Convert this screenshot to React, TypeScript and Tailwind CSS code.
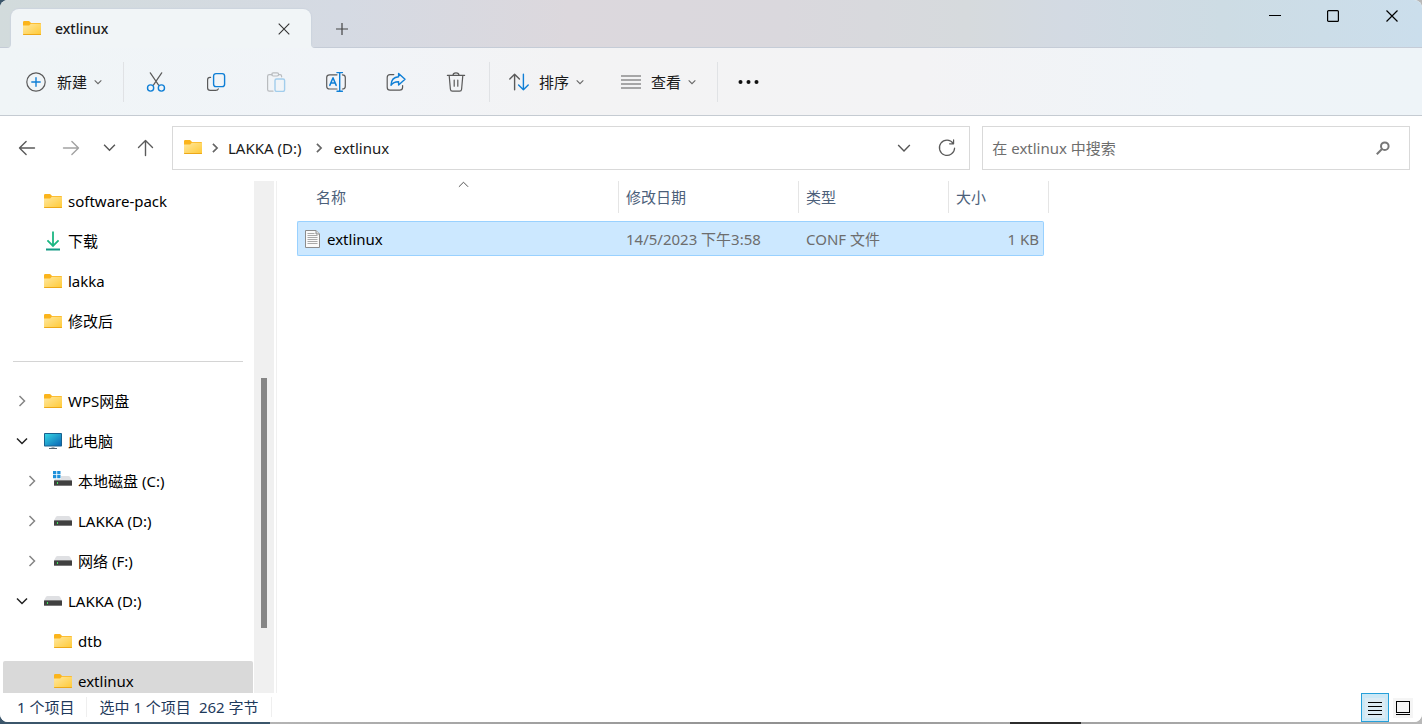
import React from "react";

type Kind = "folder" | "download" | "monitor" | "drive" | "system";

function Folder() {
  return (
    <svg width="18" height="15" viewBox="0 0 18 15" className="shrink-0" aria-hidden="true">
      <defs>
        <linearGradient id="folderFace" x1="0" y1="0" x2="1" y2="1">
          <stop offset="0" stopColor="#ffe8a0" />
          <stop offset="1" stopColor="#ffc935" />
        </linearGradient>
      </defs>
      <path d="M0 1.2Q0 0 1.2 0H5.6Q6.2 0 6.7.5L8 2H17Q18 2 18 3V5H0Z" fill="#fbb41c" />
      <path d="M0 4.4H6.2L7.8 2.8H17.2Q18 2.8 18 3.6V14H0Z" fill="url(#folderFace)" />
      <path d="M0 13H18V13.2Q18 14 17.2 14H.8Q0 14 0 13.2Z" fill="#eda818" />
    </svg>
  );
}

function Drive({ system = false }: { system?: boolean }) {
  return (
    <svg width="19" height="20" viewBox="0 0 19 20" className="-ml-px shrink-0" aria-hidden="true">
      <path d="M4.6 5H15.4Q16.4 5 17 5.8L19 9.6V11H1V9.6L3 5.8Q3.6 5 4.6 5Z" fill="#dfe0e3" />
      <rect x="1" y="9" width="18" height="6" rx=".6" fill="#7a7a7a" />
      <rect x="1" y="10" width="18" height="4" fill="#404040" />
      <rect x="4" y="11" width="1" height="2" fill="#3de35b" />
      {system && (
        <>
          <path d="M0 0H8V8H0Z" fill="#fff" />
          <path d="M0 0H3.3V3.2H0ZM4.2 0H7.5V3.2H4.2ZM0 4.1H3.3V7.3H0ZM4.2 4.1H7.5V7.3H4.2Z" fill="#1e90da" />
        </>
      )}
    </svg>
  );
}

function Monitor() {
  return (
    <svg width="18" height="17" viewBox="0 0 18 17" className="shrink-0" aria-hidden="true">
      <defs>
        <linearGradient id="screen" x1="0" y1="0" x2="1" y2="1">
          <stop offset="0" stopColor="#35d5e4" />
          <stop offset="1" stopColor="#0b67b6" />
        </linearGradient>
      </defs>
      <rect width="18" height="13.5" rx=".8" fill="#17618f" />
      <rect x="1" y="1" width="16" height="11.5" fill="url(#screen)" />
      <path d="M7.5 13.5H10.5V15.5H7.5Z" fill="#a9b2bb" />
      <path d="M5 15H13V16H5Z" fill="#53606c" />
    </svg>
  );
}

function Download() {
  return (
    <svg width="18" height="20" viewBox="0 0 18 20" className="shrink-0" fill="none" aria-hidden="true">
      <path d="M9 .5V14.5M3.4 9.4L9 15L14.6 9.4" stroke="#1bb682" strokeWidth="1.8" />
      <path d="M2 18.5H16" stroke="#139a84" strokeWidth="1.8" />
    </svg>
  );
}

function NodeIcon({ kind }: { kind: Kind }) {
  if (kind === "folder") return <Folder />;
  if (kind === "download") return <Download />;
  if (kind === "monitor") return <Monitor />;
  return <Drive system={kind === "system"} />;
}

type Dir = "down" | "right" | "up";

function Chevron({ dir, className }: { dir: Dir; className: string }) {
  const d = {
    down: "M1 3.5L6 8.5L11 3.5",
    right: "M3.5 1L8.5 6L3.5 11",
    up: "M1 8.5L6 3.5L11 8.5",
  }[dir];
  return (
    <svg viewBox="0 0 12 12" fill="none" stroke="currentColor" className={"shrink-0 " + className} aria-hidden="true">
      <path d={d} />
    </svg>
  );
}

function Icon({ children, className = "" }: { children: React.ReactNode; className?: string }) {
  return (
    <svg
      width="20"
      height="20"
      viewBox="0 0 20 20"
      fill="none"
      stroke="#5a5a5a"
      strokeWidth="1.2"
      strokeLinecap="round"
      strokeLinejoin="round"
      className={"shrink-0 " + className}
      aria-hidden="true"
    >
      {children}
    </svg>
  );
}

const BLUE = "#0f7fd6";

const tools: { label: string; disabled?: boolean; icon: React.ReactNode }[] = [
  {
    label: "剪切",
    icon: (
      <>
        <path d="M4.3 0.8L12.6 13.2M15.7 0.8L7.4 13.2" />
        <circle cx="4.6" cy="16" r="3.1" stroke={BLUE} strokeWidth="1.4" />
        <circle cx="15.4" cy="16" r="3.1" stroke={BLUE} strokeWidth="1.4" />
      </>
    ),
  },
  {
    label: "复制",
    icon: (
      <>
        <path d="M4.6 5.4H4Q1.6 5.4 1.6 7.8V15.8Q1.6 18.4 4.2 18.4H9.6Q12 18.4 12.3 16.8" />
        <rect x="7.6" y="1.6" width="11" height="13" rx="2.4" stroke={BLUE} strokeWidth="1.4" />
      </>
    ),
  },
  {
    label: "粘贴",
    disabled: true,
    icon: (
      <>
        <path d="M6 2.6H3.2Q1.6 2.6 1.6 4.2V17.6Q1.6 19.2 3.2 19.2H7M12.5 2.6H14Q15.6 2.6 15.6 4.2V4.8" stroke="#b9bcbf" />
        <rect x="5.8" y="0.8" width="6.8" height="3.2" rx="1.4" stroke="#b9bcbf" />
        <rect x="9" y="7" width="9.6" height="12.4" rx="1.6" stroke="#a2cdec" strokeWidth="1.4" />
      </>
    ),
  },
  {
    label: "重命名",
    icon: (
      <>
        <path d="M11 2.8H3.6Q.7 2.8 .7 5.6V14.2Q.7 17 3.6 17H11M16.4 2.8Q19.3 2.8 19.3 5.6V14.2Q19.3 17 16.4 17" />
        <path d="M13.7 .6V19.2M11 .6H16.4M11 19.2H16.4" stroke={BLUE} strokeWidth="1.4" />
        <path d="M3.8 13.4L7 5.8L10.2 13.4M4.9 11H9.1" stroke={BLUE} strokeWidth="1.5" />
      </>
    ),
  },
  {
    label: "共享",
    icon: (
      <>
        <path d="M7.8 2.6H4Q1.2 2.6 1.2 5.4V15.2Q1.2 18.2 4 18.2H13.6Q16.6 18.2 16.6 15.2V13.6" />
        <path d="M12.6 1.4L19 7.2L12.6 13V9.8Q7.8 9.6 5 13.2Q5.2 5.4 12.6 4.8Z" stroke={BLUE} strokeWidth="1.4" />
      </>
    ),
  },
  {
    label: "删除",
    icon: (
      <path d="M1.4 3.4H18.6M7 3.2Q7 .8 10 .8T13 3.2M3.2 3.6L4.4 17.2Q4.6 19.2 6.4 19.2H13.6Q15.4 19.2 15.6 17.2L16.8 3.6M8.2 8V14.2M11.8 8V14.2" />
    ),
  },
];

function Divider() {
  return <div className="h-10 w-px shrink-0 bg-[#e0e2e5]" />;
}

type Row = { label: string; kind: Kind; level: 0 | 1; arrow?: "right" | "down"; selected?: boolean };

const quick: Row[] = [
  { label: "software-pack", kind: "folder", level: 0 },
  { label: "下载", kind: "download", level: 0 },
  { label: "lakka", kind: "folder", level: 0 },
  { label: "修改后", kind: "folder", level: 0 },
];

const tree: Row[] = [
  { label: "WPS网盘", kind: "folder", level: 0, arrow: "right" },
  { label: "此电脑", kind: "monitor", level: 0, arrow: "down" },
  { label: "本地磁盘 (C:)", kind: "system", level: 1, arrow: "right" },
  { label: "LAKKA (D:)", kind: "drive", level: 1, arrow: "right" },
  { label: "网络 (F:)", kind: "drive", level: 1, arrow: "right" },
  { label: "LAKKA (D:)", kind: "drive", level: 0, arrow: "down" },
  { label: "dtb", kind: "folder", level: 1 },
  { label: "extlinux", kind: "folder", level: 1, selected: true },
];

function TreeRow({ row }: { row: Row }) {
  return (
    <li>
      <button
        type="button"
        className={
          "flex h-10 w-full items-center rounded-xs text-left text-black " +
          (row.level ? "pl-[23px] " : "pl-[13px] ") +
          (row.selected ? "bg-[#d9d9d9]" : "")
        }
      >
        <span className="flex w-7 shrink-0">
          {row.arrow && (
            <Chevron dir={row.arrow} className={"size-3 stroke-[1.5] " + (row.arrow === "down" ? "text-[#222]" : "text-[#858585]")} />
          )}
        </span>
        <NodeIcon kind={row.kind} />
        <span className="ml-1.5 whitespace-nowrap">{row.label}</span>
      </button>
    </li>
  );
}

function FileIcon() {
  return (
    <svg width="15" height="18" viewBox="0 0 15 18" className="shrink-0" aria-hidden="true">
      <path d="M.5 .5H11L14.5 4V17.5H.5Z" fill="#fafafa" stroke="#8c8c8c" />
      <path d="M11 .5V4H14.5" fill="#ddd" stroke="#8c8c8c" />
      <path d="M2.5 3.5H9.5M2.5 5.5H12.5M2.5 7.5H12.5M2.5 9.5H12.5M2.5 11.5H12.5M2.5 13.5H12.5" stroke="#a9a9a9" />
    </svg>
  );
}

const cell = "flex h-[35px] items-center border-y border-[#99d1ff] bg-[#cce8ff] ";

export default function App() {
  return (
    <div className="flex h-screen w-full flex-col overflow-hidden bg-[linear-gradient(90deg,#3b566b_19%,#b4b4b4_19%,#8f8f8f_56%,#a6a6a6_71%,#2c2c2c_71%,#2c2c2c_76%,#a0a0a0_76%,#b8b8b8)] pb-0.5 font-['Noto_Sans','Noto_Sans_CJK_SC',sans-serif] text-[15px] leading-5 text-[#1a1a1a]">
      <div className="flex min-h-0 flex-1 flex-col overflow-hidden rounded-lg bg-white">
        <header className="flex h-12 shrink-0 items-end border-b border-[#c5ccd7] bg-[linear-gradient(90deg,#d2dbdc,#d5dae3_24%,#dcd8dd_40%,#dad8dd_55%,#d6dadd_68%,#d3dae3_75%,#cddce4_86%,#cbdeec)]">
          <div className="relative -mb-px ml-[11px] flex h-[39px] w-[300px] items-center rounded-t-lg bg-[#f1f5f7] pr-[21px] pl-3 shadow-[0_0_1px_1px_#cdd4de] [clip-path:inset(-2px_-6px_0_-6px)]">
            <svg width="4" height="4" viewBox="0 0 4 4" className="absolute bottom-0 -left-1" aria-hidden="true">
              <path d="M0 4Q4 4 4 0V4Z" fill="#f1f5f7" />
            </svg>
            <svg width="4" height="4" viewBox="0 0 4 4" className="absolute -right-1 bottom-0" aria-hidden="true">
              <path d="M4 4Q0 4 0 0V4Z" fill="#f1f5f7" />
            </svg>
            <Folder />
            <span className="ml-3.5 flex-1 text-sm font-medium">extlinux</span>
            <button type="button" aria-label="关闭标签页">
              <svg width="12" height="12" viewBox="0 0 12 12" stroke="#333" strokeWidth="1.1" aria-hidden="true">
                <path d="M.7 .7L11.3 11.3M11.3 .7L.7 11.3" />
              </svg>
            </button>
          </div>
          <button type="button" aria-label="新建标签页" className="mb-3 ml-[25px]">
            <svg width="12" height="12" viewBox="0 0 12 12" stroke="#444" strokeWidth="1.2" aria-hidden="true">
              <path d="M6 0V12M0 6H12" />
            </svg>
          </button>
          <div className="ml-auto flex h-8 self-start text-black">
            <button type="button" aria-label="最小化" className="flex w-[58px] items-center justify-center">
              <svg width="12" height="12" stroke="currentColor" aria-hidden="true">
                <path d="M0 5.5H12" />
              </svg>
            </button>
            <button type="button" aria-label="最大化" className="flex w-[58px] items-center justify-center">
              <svg width="12" height="12" fill="none" stroke="currentColor" strokeWidth="1.2" aria-hidden="true">
                <rect x=".6" y=".6" width="10.8" height="10.8" rx="1" />
              </svg>
            </button>
            <button type="button" aria-label="关闭" className="flex w-[60px] items-center justify-center">
              <svg width="12" height="12" stroke="currentColor" strokeWidth="1.2" aria-hidden="true">
                <path d="M.5 .5L11.5 11.5M11.5 .5L.5 11.5" />
              </svg>
            </button>
          </div>
        </header>

        <div className="flex h-[68px] shrink-0 items-center border-b border-[#c5cbd2] bg-[linear-gradient(90deg,#f0f5f7,#f1f4f8_25%,#f3f3f4_40%,#f3f3f5_65%,#eff4f8_85%,#eef4f8)]">
          <button type="button" className="flex w-[123px] items-center pl-[26px]">
            <Icon>
              <circle cx="10" cy="10" r="9.2" />
              <path d="M10 5.8V14.2M5.8 10H14.2" stroke={BLUE} strokeWidth="1.4" />
            </Icon>
            <span className="ml-[11px]">新建</span>
            <Chevron dir="down" className="ml-[7px] size-2 stroke-[1.6] text-[#666]" />
          </button>
          <Divider />
          <div className="mr-[3px] ml-0.5 flex">
            {tools.map((t) => (
              <button key={t.label} type="button" aria-label={t.label} disabled={t.disabled} className="flex h-10 w-[60px] items-center justify-center">
                <Icon>{t.icon}</Icon>
              </button>
            ))}
          </div>
          <Divider />
          <button type="button" className="flex items-center pl-[19px]">
            <Icon>
              <path d="M5.6 17.8V2.2M.8 7L5.6 2.2L10.4 7" strokeWidth="1.4" />
              <path d="M14.4 2.2V17.8M9.6 13L14.4 17.8L19.2 13" stroke={BLUE} strokeWidth="1.4" />
            </Icon>
            <span className="ml-2.5">排序</span>
            <Chevron dir="down" className="ml-[7px] size-2 stroke-[1.6] text-[#666]" />
          </button>
          <button type="button" className="flex items-center pr-[21px] pl-[37px]">
            <Icon>
              <path d="M0 4H20M0 8H20M0 12H20M0 16H20" strokeLinecap="butt" />
            </Icon>
            <span className="ml-2.5">查看</span>
            <Chevron dir="down" className="ml-[7px] size-2 stroke-[1.6] text-[#666]" />
          </button>
          <Divider />
          <button type="button" aria-label="更多" className="ml-5">
            <svg width="22" height="20" viewBox="0 0 22 20" fill="#111" aria-hidden="true">
              <circle cx="2.5" cy="10" r="2" />
              <circle cx="10.5" cy="10" r="2" />
              <circle cx="18.5" cy="10" r="2" />
            </svg>
          </button>
        </div>

        <div className="flex h-[65px] shrink-0 items-center pr-3 pb-0.5 pl-4">
          <button type="button" aria-label="后退">
            <Icon>
              <path d="M3.5 10H18.5M10.1 3.4L3.5 10L10.1 16.6" strokeWidth="1.4" />
            </Icon>
          </button>
          <button type="button" aria-label="前进" className="ml-[25px]">
            <Icon>
              <path d="M2.5 10H17.5M10.9 3.4L17.5 10L10.9 16.6" stroke="#a2a2a2" strokeWidth="1.4" />
            </Icon>
          </button>
          <button type="button" aria-label="最近浏览的位置" className="ml-[22px]">
            <Chevron dir="down" className="size-[13px] stroke-[1.3] text-[#555]" />
          </button>
          <button type="button" aria-label="上移" className="ml-5">
            <Icon>
              <path d="M9.5 17.5V2.6M2.5 9.6L9.5 2.6L16.5 9.6" strokeWidth="1.4" />
            </Icon>
          </button>
          <nav aria-label="地址" className="ml-4 flex h-11 min-w-0 grow-[774] basis-0 items-center border border-[#d9d9d9] pr-3 pl-[11px]">
            <Folder />
            <Chevron dir="right" className="ml-2 size-2.5 stroke-2 text-[#666]" />
            <a href="#lakka" className="ml-2 whitespace-nowrap">LAKKA (D:)</a>
            <Chevron dir="right" className="ml-[13px] size-2.5 stroke-2 text-[#666]" />
            <a href="#extlinux" className="ml-[9px]">extlinux</a>
            <button type="button" aria-label="以前的位置" className="ml-auto">
              <Chevron dir="down" className="size-[14px] stroke-[1.2] text-[#555]" />
            </button>
            <button type="button" aria-label="刷新" className="ml-[26px]">
              <Icon>
                <path d="M16.2 5.4A7.6 7.6 0 1 0 17.6 10M16.6 1.8V5.8H12.6" />
              </Icon>
            </button>
          </nav>
          <label className="ml-3 flex h-11 min-w-0 grow-[398] basis-0 items-center border border-[#d9d9d9] pr-[19px] pl-[9px]">
            <input
              type="search"
              aria-label="搜索"
              placeholder="在 extlinux 中搜索"
              className="min-w-0 flex-1 outline-none placeholder:text-[#6d6d6d]"
            />
            <svg width="14" height="14" viewBox="0 0 14 14" fill="none" stroke="#777" strokeWidth="2" aria-hidden="true">
              <circle cx="8.8" cy="5.2" r="3.8" />
              <path d="M6 8L.8 13.2" />
            </svg>
          </label>
        </div>

        <div className="flex min-h-0 flex-1">
          <aside className="flex w-[277px] shrink-0 border-r border-[#f0f0f0]">
            <div className="min-w-0 flex-1 overflow-hidden pr-px pl-[3px]">
              <ul>
                {quick.map((r) => (
                  <TreeRow key={r.label} row={r} />
                ))}
              </ul>
              <div className="flex h-10 items-center px-2.5">
                <hr className="w-full border-[#d4d4d4]" />
              </div>
              <ul>
                {tree.map((r, i) => (
                  <TreeRow key={i} row={r} />
                ))}
              </ul>
            </div>
            <div className="mr-0.5 flex w-5 flex-col items-center bg-[#f0f0f0]">
              <div className="grow-[197]" />
              <div className="w-1.5 grow-[250] bg-[#868686]" />
              <div className="grow-[65]" />
            </div>
          </aside>

          <main className="min-w-0 flex-1 overflow-hidden pl-5">
            <table className="w-[752px] table-fixed border-separate border-spacing-0">
              <colgroup>
                <col />
                <col className="w-[180px]" />
                <col className="w-[150px]" />
                <col className="w-[100px]" />
              </colgroup>
              <thead>
                <tr className="h-8 text-left text-[#4c607a]">
                  <th className="relative border-r border-[#e5e5e5] p-0 pl-[19px] font-normal">
                    名称
                    <Chevron dir="up" className="absolute -top-0.5 left-[161px] size-[11px] text-[#444]" />
                  </th>
                  <th className="border-r border-[#e5e5e5] p-0 pl-[7px] font-normal">修改日期</th>
                  <th className="border-r border-[#e5e5e5] p-0 pl-[7px] font-normal">类型</th>
                  <th className="border-r border-[#e5e5e5] p-0 pl-[7px] font-normal">大小</th>
                </tr>
              </thead>
              <tbody className="text-[#6d6d6d]">
                <tr>
                  <td className="p-0 pt-2">
                    <div className={cell + "rounded-l-xs border-l pl-[7px] text-black"}>
                      <FileIcon />
                      <span className="ml-[7px]">extlinux</span>
                    </div>
                  </td>
                  <td className="p-0 pt-2">
                    <div className={cell + "pl-[7px] whitespace-nowrap"}>14/5/2023 下午3:58</div>
                  </td>
                  <td className="p-0 pt-2">
                    <div className={cell + "pl-[7px]"}>CONF 文件</div>
                  </td>
                  <td className="p-0 pt-2 pr-[5px]">
                    <div className={cell + "justify-end rounded-r-xs border-r pr-1"}>1 KB</div>
                  </td>
                </tr>
              </tbody>
            </table>
          </main>
        </div>

        <footer className="flex h-[29px] shrink-0 items-center bg-white pr-[5px] pl-[17px] text-[#1e395b]">
          <div className="flex items-center pb-0.5">
            <span>1 个项目</span>
            <span className="mx-3 h-5 w-px bg-[#efefef]" />
            <span>选中 1 个项目</span>
            <span className="ml-2">262 字节</span>
            <span className="ml-3 h-5 w-px bg-[#efefef]" />
          </div>
          <div className="ml-auto flex h-full">
            <button type="button" aria-label="详细信息" className="flex h-full w-7 items-center justify-center border border-[#26a0da] bg-[#cce8f6]">
              <span className="flex size-5 items-center justify-center bg-[#dcebf4]">
                <svg width="14" height="14" stroke="#000" aria-hidden="true">
                  <path d="M0 1.5H14M0 5.5H14M0 9.5H14M0 13.5H14" />
                </svg>
              </span>
            </button>
            <button type="button" aria-label="大图标" className="flex w-7 items-center justify-center">
              <span className="flex size-5 items-center justify-center bg-[#f5f5f5]">
                <svg width="14" height="14" fill="none" stroke="#000" aria-hidden="true">
                  <rect x=".5" y=".5" width="13" height="11" />
                  <path d="M0 13.5H14" />
                </svg>
              </span>
            </button>
          </div>
        </footer>
      </div>
    </div>
  );
}
